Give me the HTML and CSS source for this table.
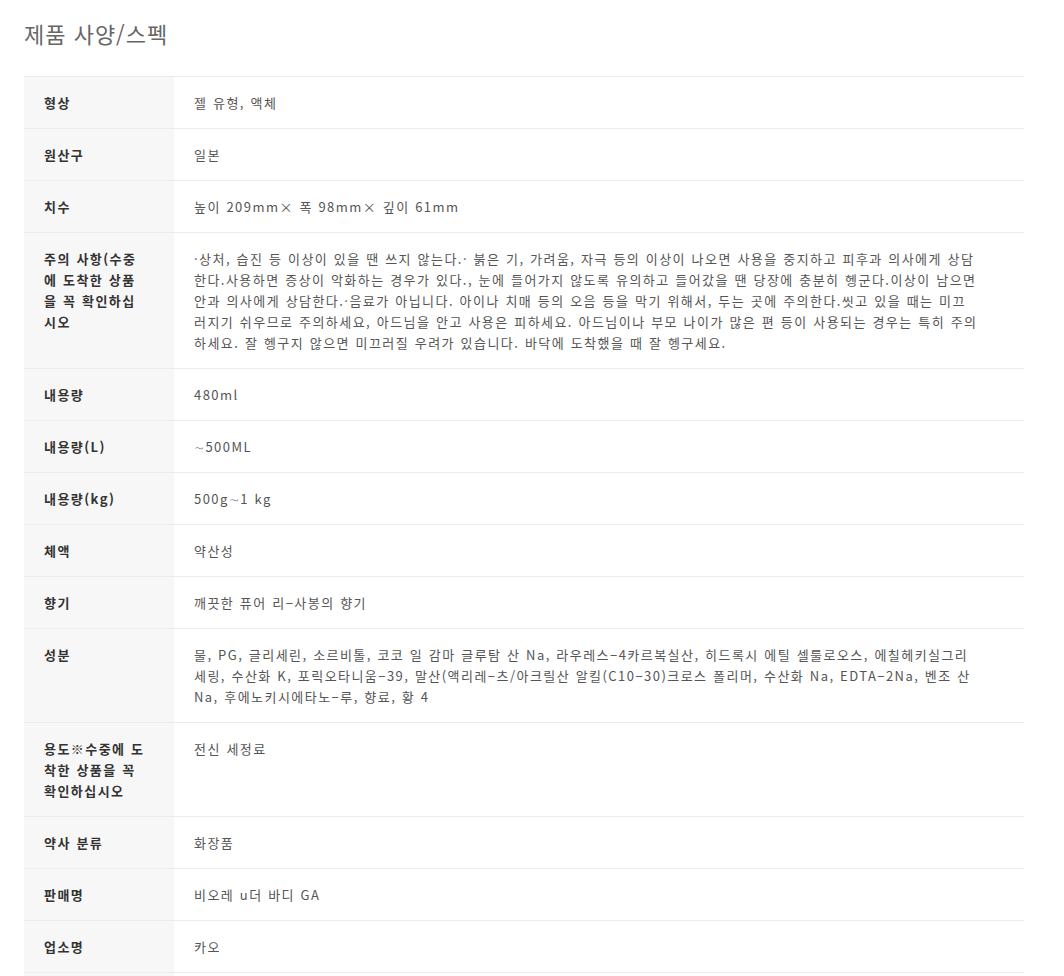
FILE: index.html
```html
<!DOCTYPE html>
<html lang="ko">
<head>
    <meta charset="UTF-8">
    <meta name="viewport" content="width=device-width, initial-scale=1.0">
    <title>제품 사양/스펙</title>
    <link rel="stylesheet" href="styles.css">
</head>
<body>
    <div id="spec">
        <h2 class="spec-title">제품 사양/스펙</h2>
        <table class="spec-table">
            <tr><th>형상</th><td>젤 유형, 액체</td></tr>
            <tr><th>원산구</th><td>일본</td></tr>
            <tr><th>치수</th><td>높이 209mm× 폭 98mm× 깊이 61mm</td></tr>
            <tr><th>주의 사항(수중<br>에 도착한 상품<br>을 꼭 확인하십<br>시오</th><td>·상처, 습진 등 이상이 있을 땐 쓰지 않는다.· 붉은 기, 가려움, 자극 등의 이상이 나오면 사용을 중지하고 피후과 의사에게 상담한다.사용하면 증상이 악화하는 경우가 있다., 눈에 들어가지 않도록 유의하고 들어갔을 땐 당장에 충분히 헹군다.이상이 남으면 안과 의사에게 상담한다.·음료가 아닙니다. 아이나 치매 등의 오음 등을 막기 위해서, 두는 곳에 주의한다.씻고 있을 때는 미끄러지기 쉬우므로 주의하세요, 아드님을 안고 사용은 피하세요. 아드님이나 부모 나이가 많은 편 등이 사용되는 경우는 특히 주의하세요. 잘 헹구지 않으면 미끄러질 우려가 있습니다. 바닥에 도착했을 때 잘 헹구세요.</td></tr>
            <tr><th>내용량</th><td>480ml</td></tr>
            <tr><th>내용량(L)</th><td>∼500ML</td></tr>
            <tr><th>내용량(kg)</th><td>500g∼1 kg</td></tr>
            <tr><th>체액</th><td>약산성</td></tr>
            <tr><th>향기</th><td>깨끗한 퓨어 리−사봉의 향기</td></tr>
            <tr><th>성분</th><td>물, PG, 글리세린, 소르비톨, 코코 일 감마 글루탐 산 Na, 라우레스−4카르복실산, 히드록시 에틸 셀룰로오스, 에칠헤키실그리세링, 수산화 K, 포릭오타니움−39, 말산(액리레−츠/아크릴산 알킬(C10−30)크로스 폴리머, 수산화 Na, EDTA−2Na, 벤조 산 Na, 후에노키시에타노−루, 향료, 황 4</td></tr>
            <tr><th>용도※수중에 도<br>착한 상품을 꼭<br>확인하십시오</th><td>전신 세정료</td></tr>
            <tr><th>약사 분류</th><td>화장품</td></tr>
            <tr><th>판매명</th><td>비오레 u더 바디 GA</td></tr>
            <tr><th>업소명</th><td>카오</td></tr>
            <tr><th>&nbsp;</th><td>&nbsp;</td></tr>
        </table>
    </div>
</body>
</html>
```

FILE: styles.css
```css
* { margin:0; padding:0; box-sizing: border-box; }
body {
    background-color: #fff;
    font-family: "Noto Sans CJK KR", "Liberation Sans", sans-serif;
    font-size: 13px;
    color: #555;
}
#spec {
    padding: 0 40px 0 24px;
}
.spec-title {
    font-size: 22px;
    font-weight: normal;
    color: #666;
    letter-spacing: 1px;
    line-height: 32px;
    padding-top: 17px;
    margin-bottom: 27px;
}
.spec-table {
    width: 100%;
    border-collapse: collapse;
    border-top: 1px solid #ebebeb;
    letter-spacing: 1.45px;
    word-spacing: 0.5px;
}
.spec-table tr {
    border-bottom: 1px solid #ebebeb;
}
.spec-table th {
    width: 150px;
    background-color: #f7f7f7;
    color: #333;
    font-weight: bold;
    text-align: left;
    vertical-align: top;
    line-height: 21px;
    padding: 15px 10px 15px 20px;
    white-space: nowrap;
}
.spec-table td {
    vertical-align: top;
    line-height: 21px;
    padding: 15px 45px 15px 20px;
    color: #555;
}
```
